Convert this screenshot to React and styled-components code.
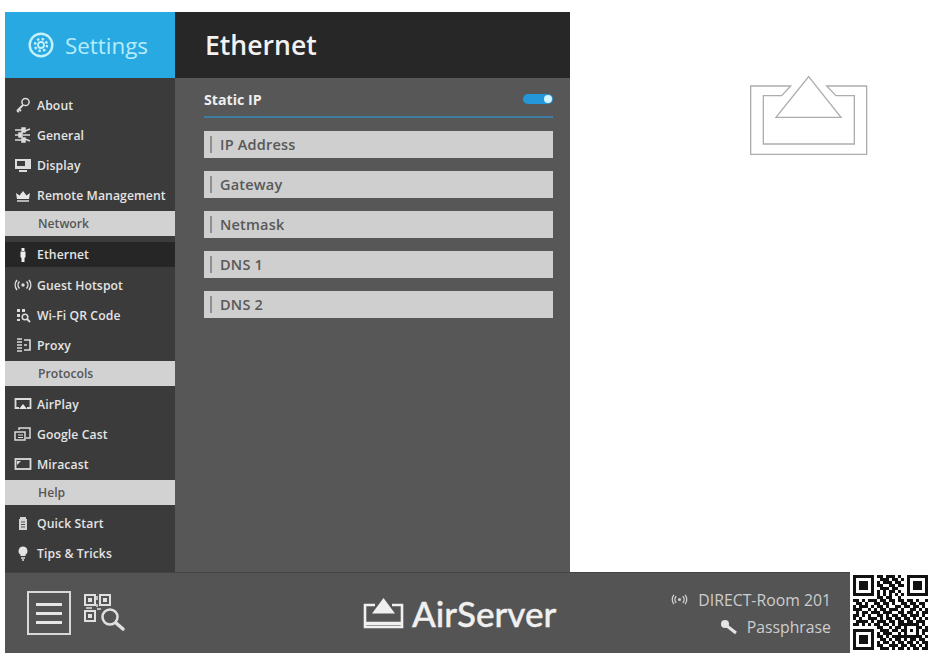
import React from "react";
import styled, { createGlobalStyle } from "styled-components";

const GlobalStyle = createGlobalStyle`
  html, body { margin: 0; padding: 0; background: #fff; }
  body { font-family: "Open Sans", "Liberation Sans", sans-serif; }
`;

const Page = styled.div`
  width: 931px;
  height: 653px;
  overflow: hidden;
  display: flex;
  flex-direction: column;
  background: #fff;
`;

const Top = styled.div`
  display: flex;
  height: 560px;
  margin-top: 12px;
  margin-left: 5px;
`;

const Sidebar = styled.aside`
  width: 170px;
  display: flex;
  flex-direction: column;
  background: #3b3b3b;
`;

const Brand = styled.div`
  height: 66px;
  display: flex;
  align-items: center;
  gap: 11px;
  padding-left: 23px;
  background: #29a9e1;
  color: #b5ecfb;
  font-size: 22.4px;
`;

const Nav = styled.nav`
  display: flex;
  flex-direction: column;
  padding-top: 12px;
`;

const Row = styled.div`
  height: ${(p) => (p.$active ? 25 : 30)}px;
  margin: ${(p) => (p.$active ? "3px 0" : "0")};
  display: flex;
  align-items: center;
  padding-left: 9px;
  gap: 5px;
  background: ${(p) => (p.$active ? "#262626" : "transparent")};
  color: #e4e4e4;
  font-size: 12.2px;
  font-weight: 600;
  white-space: nowrap;
  letter-spacing: 0.1px;
`;

const Band = styled.div`
  height: 25px;
  margin: 1px 0 3px;
  display: flex;
  align-items: center;
  padding-left: 33px;
  background: #d2d2d2;
  color: #565656;
  font-size: 12.2px;
  font-weight: 600;
`;

const Main = styled.main`
  width: 395px;
  display: flex;
  flex-direction: column;
  background: #575757;
`;

const TitleBar = styled.div`
  height: 66px;
  display: flex;
  align-items: center;
  padding-left: 30px;
  background: #272727;
  color: #f2f2f2;
  font-size: 26.6px;
  font-weight: 600;
`;

const Content = styled.div`
  display: flex;
  flex-direction: column;
  gap: 13px;
  padding: 8px 17px 0 29px;
`;

const ToggleRow = styled.div`
  height: 26px;
  display: flex;
  align-items: center;
  justify-content: space-between;
  border-bottom: 2px solid #3f7ea3;
  color: #eee;
  font-size: 14.2px;
  font-weight: 700;
  padding-bottom: 4px;
`;

const Toggle = styled.span`
  position: relative;
  width: 30px;
  height: 10px;
  border-radius: 5px;
  background: #2497db;

  &::after {
    content: "";
    position: absolute;
    right: 1px;
    top: 1px;
    width: 8px;
    height: 8px;
    border-radius: 50%;
    background: #d6f4ff;
  }
`;

const Field = styled.div`
  height: 27px;
  box-sizing: border-box;
  display: flex;
  align-items: center;
  padding-left: 6px;
  background: #cfcfcf;
  color: #585858;
  font-size: 14.5px;
  font-weight: 600;
  letter-spacing: 0.2px;

  &::before {
    content: "";
    width: 2px;
    height: 17px;
    margin-right: 8px;
    background: #8f8f8f;
  }
`;

const Aside = styled.div`
  flex: 1;
  padding: 48px 0 0 160px;
`;

const Bottom = styled.div`
  flex: 1;
  display: flex;
  margin-left: 5px;
`;

const Bar = styled.footer`
  flex: 1;
  display: flex;
  align-items: center;
  padding: 0 19px 0 22px;
  background: #545454;
  border-top: 1px solid #444;
`;

const Tools = styled.div`
  display: flex;
  align-items: center;
  gap: 12px;
`;

const MenuButton = styled.button`
  width: 44px;
  height: 44px;
  box-sizing: border-box;
  display: flex;
  flex-direction: column;
  align-items: center;
  justify-content: center;
  gap: 6px;
  padding: 0;
  border: 2px solid #d8d8d8;
  background: transparent;

  span {
    width: 26px;
    height: 3px;
    background: #e6e6e6;
  }
`;

const Logo = styled.div`
  display: flex;
  align-items: center;
  gap: 8px;
  margin-left: 236px;
  color: #f0f0f0;
  font-family: Lato, "Liberation Sans", sans-serif;
  font-size: 35px;
  font-weight: 500;
  -webkit-text-stroke: 0.4px #f0f0f0;
`;

const Network = styled.div`
  margin-left: auto;
  display: flex;
  flex-direction: column;
  align-items: flex-end;
  gap: 5px;
  color: #cdcdcd;
  font-size: 15.8px;
`;

const NetworkLine = styled.div`
  display: flex;
  align-items: center;
  gap: ${(p) => p.$gap}px;
`;

const QrBox = styled.div`
  width: 81px;
  box-sizing: border-box;
  background: #fff;
  display: flex;
  align-items: center;
  padding-left: 3px;
`;

const Ico = ({ children }) => (
  <svg width="18" height="16" viewBox="0 0 18 16" fill="none" stroke="#dcdcdc" strokeWidth="1.5" style={{ flex: "none" }}>
    {children}
  </svg>
);

const icons = {
  about: (
    <Ico>
      <circle cx="11.5" cy="5" r="3.6" />
      <path d="M9 8l-6 6M5 12l2 2M3 14l2 1" strokeWidth="1.8" />
    </Ico>
  ),
  general: (
    <Ico>
      <path d="M1 3h8M1 8h5M1 13h8M11 4l5-2M9 8h7M11 12l5 2" strokeWidth="1.6" />
      <rect x="8" y="1" width="3" height="4" fill="#dcdcdc" />
      <rect x="5" y="6" width="3" height="4" fill="#dcdcdc" />
      <rect x="8" y="11" width="3" height="4" fill="#dcdcdc" />
    </Ico>
  ),
  display: (
    <Ico>
      <rect x="1" y="2" width="16" height="10" fill="#dcdcdc" stroke="none" />
      <path d="M3 4h8v5H3z" fill="#3b3b3b" stroke="none" />
      <path d="M5 14h8" strokeWidth="2" />
    </Ico>
  ),
  crown: (
    <Ico>
      <path d="M2 6l3.5 2.5L9 4l3.5 4.5L16 6l-1 6H3z" fill="#e6e6e6" stroke="none" />
      <path d="M3 14h12" strokeWidth="1.5" />
    </Ico>
  ),
  ethernet: (
    <Ico>
      <path d="M6.5 4.5h5V10l-1 1v4h-3v-4l-1-1z" fill="#eee" stroke="none" />
      <path d="M7.5 1h3v3h-3z" fill="#eee" stroke="none" />
    </Ico>
  ),
  hotspot: (
    <Ico>
      <circle cx="9" cy="8" r="1.7" fill="#dcdcdc" stroke="none" />
      <path d="M5.5 4.5a5 5 0 000 7M12.5 4.5a5 5 0 010 7M3 3a8 8 0 000 10M15 3a8 8 0 010 10" />
    </Ico>
  ),
  wifiqr: (
    <Ico>
      <path d="M3 2h3v3H3zM8 2h3v3H8zM3 7h3v3H3zM3 12h3v2H3z" fill="#dcdcdc" stroke="none" />
      <circle cx="11" cy="10" r="2.8" />
      <path d="M13 12l3 3" strokeWidth="1.8" />
    </Ico>
  ),
  proxy: (
    <Ico>
      <path d="M3 2h5M3 5h5M3 8h5M3 11h5M3 14h5" strokeWidth="1.6" />
      <path d="M10 3h6v10h-6M10 8h3" strokeWidth="1.6" />
    </Ico>
  ),
  airplay: (
    <Ico>
      <path d="M5 12H1.5V3h15v9H13" strokeWidth="1.8" />
      <path d="M9 8l4 5H5z" fill="#e6e6e6" stroke="none" />
    </Ico>
  ),
  cast: (
    <Ico>
      <path d="M5 4V2h11v10h-4" />
      <rect x="1" y="6" width="10" height="8" />
      <path d="M4 9h5M4 11.5h5" strokeWidth="1.2" />
    </Ico>
  ),
  miracast: (
    <Ico>
      <rect x="1.5" y="3" width="15" height="10" strokeWidth="1.8" />
      <path d="M3 5h4L3 9z" fill="#dcdcdc" stroke="none" />
    </Ico>
  ),
  quick: (
    <Ico>
      <path d="M6 2h6v2h1v11H5V4h1z" fill="#d4d4d4" stroke="none" />
      <path d="M7 7h4M7 9.5h4M7 12h4" stroke="#555" strokeWidth="1" />
    </Ico>
  ),
  tips: (
    <Ico>
      <path d="M9 1.5a4.5 4.5 0 00-2.5 8.2V11h5V9.7A4.5 4.5 0 009 1.5z" fill="#e4e4e4" stroke="none" />
      <path d="M7 13h4M8 15h2" strokeWidth="1.4" />
    </Ico>
  ),
};

const Gear = () => (
  <svg width="26" height="26" viewBox="0 0 26 26" fill="none" stroke="#c5f1fc">
    <circle cx="13" cy="13" r="11.3" strokeWidth="2.4" />
    <circle cx="13" cy="13" r="3" strokeWidth="1.8" />
    <circle cx="13" cy="13" r="6" strokeWidth="2.4" strokeDasharray="2.4 2.3" />
  </svg>
);

const BigAirplay = () => (
  <svg width="160" height="110" viewBox="0 0 480 330" fill="none" stroke="#adadad" strokeWidth="4" style={{ display: "block" }}>
    <path d="M182 78H62V283H410V78H290L318 107H373V252H100V107H155Z" />
    <path d="M236 50L333 172H138Z" />
  </svg>
);

const LogoMark = () => (
  <svg width="41" height="31" viewBox="0 0 41 31" fill="none" style={{ flex: "none" }}>
    <path d="M12 7H2V29H39V7H29" stroke="#f0f0f0" strokeWidth="2.6" />
    <path d="M2 25.5H39" stroke="#f0f0f0" strokeWidth="3.4" />
    <path d="M20.5 0L32 15.5H9z" fill="#f0f0f0" />
  </svg>
);

const QrSearch = () => (
  <svg width="44" height="40" viewBox="0 0 44 40" fill="none" stroke="#e0e0e0" style={{ display: "block" }}>
    <rect x="2" y="2" width="10" height="10" strokeWidth="2" />
    <rect x="5" y="5" width="4" height="4" fill="#e0e0e0" stroke="none" />
    <rect x="17" y="2" width="10" height="10" strokeWidth="2" />
    <rect x="20" y="5" width="4" height="4" fill="#e0e0e0" stroke="none" />
    <rect x="2" y="18" width="10" height="10" strokeWidth="2" />
    <rect x="5" y="21" width="4" height="4" fill="#e0e0e0" stroke="none" />
    <path d="M14 3v4M14 11v3M3 15h6M14 16h4" strokeWidth="1.5" />
    <circle cx="27" cy="24" r="7.5" strokeWidth="2.5" />
    <path d="M33 30l7 6" strokeWidth="3.5" strokeLinecap="round" />
  </svg>
);

const SignalSmall = () => (
  <svg width="17" height="13" viewBox="0 0 18 14" fill="none" stroke="#cfcfcf" strokeWidth="1.5">
    <circle cx="9" cy="7" r="1.7" fill="#cfcfcf" stroke="none" />
    <path d="M5.5 3.5a5 5 0 000 7M12.5 3.5a5 5 0 010 7M3 2a8 8 0 000 10M15 2a8 8 0 010 10" />
  </svg>
);

const KeyIcon = () => (
  <svg width="18" height="16" viewBox="0 0 18 16" fill="none">
    <circle cx="5" cy="5" r="4" fill="#e4e4e4" />
    <path d="M7 7l9 7" stroke="#e4e4e4" strokeWidth="3" />
  </svg>
);

const qrRows = [
  "1111111 0 110111010 0 1111111",
  "1000001 0 011101101 0 1000001",
  "1011101 0 101110110 0 1011101",
  "1011101 0 110011011 0 1011101",
  "1011101 0 011101100 0 1011101",
  "1000001 0 101011010 0 1000001",
  "1111111 0 101010101 0 1111111",
  "0000000 0 110110010 0 0000000",
  "1101011 1 011011011 0 1101001",
  "0110100 1 101101001 1 0110110",
  "1011101 0 110100110 1 1011010",
  "1110010 1 011011101 0 0110101",
  "0101101 1 101110011 0 1101011",
  "1101010 0 110101101 1 0111010",
  "1010011 1 010110110 1 1010101",
  "0111101 0 111011011 0 1101110",
  "1101010 1 101101011 1 1111010",
  "0000000 0 110010110 1 0001101",
  "1111111 0 011101101 1 0101011",
  "1000001 0 101110010 1 0001010",
  "1011101 0 110101111 1 1111101",
  "1011101 0 011010110 1 0110110",
  "1011101 0 101101011 0 1101011",
  "1000001 0 110011101 1 0110101",
  "1111111 0 011101011 0 1011011",
].map((r) => r.replace(/ /g, ""));

const QrCode = () => (
  <svg width="75" height="75" viewBox="0 0 25 25" shapeRendering="crispEdges">
    {qrRows.map((row, y) =>
      row.split("").map((c, x) => (c === "1" ? <rect key={`${x}-${y}`} x={x} y={y} width="1" height="1" fill="#111" /> : null))
    )}
  </svg>
);

const sections = [
  { items: [["About", "about"], ["General", "general"], ["Display", "display"], ["Remote Management", "crown"]] },
  { band: "Network", items: [["Ethernet", "ethernet", true], ["Guest Hotspot", "hotspot"], ["Wi-Fi QR Code", "wifiqr"], ["Proxy", "proxy"]] },
  { band: "Protocols", items: [["AirPlay", "airplay"], ["Google Cast", "cast"], ["Miracast", "miracast"]] },
  { band: "Help", items: [["Quick Start", "quick"], ["Tips & Tricks", "tips"]] },
];

const fields = ["IP Address", "Gateway", "Netmask", "DNS 1", "DNS 2"];

export default function App() {
  return (
    <Page>
      <GlobalStyle />
      <Top>
        <Sidebar>
          <Brand>
            <Gear />
            Settings
          </Brand>
          <Nav>
            {sections.map((section, i) => (
              <React.Fragment key={i}>
                {section.band && <Band>{section.band}</Band>}
                {section.items.map(([label, icon, active]) => (
                  <Row key={label} $active={active}>
                    {icons[icon]}
                    {label}
                  </Row>
                ))}
              </React.Fragment>
            ))}
          </Nav>
        </Sidebar>
        <Main>
          <TitleBar>Ethernet</TitleBar>
          <Content>
            <ToggleRow>
              Static IP
              <Toggle />
            </ToggleRow>
            {fields.map((f) => (
              <Field key={f}>{f}</Field>
            ))}
          </Content>
        </Main>
        <Aside>
          <BigAirplay />
        </Aside>
      </Top>
      <Bottom>
        <Bar>
          <Tools>
            <MenuButton>
              <span />
              <span />
              <span />
            </MenuButton>
            <QrSearch />
          </Tools>
          <Logo>
            <LogoMark />
            AirServer
          </Logo>
          <Network>
            <NetworkLine $gap={10}>
              <SignalSmall />
              DIRECT-Room 201
            </NetworkLine>
            <NetworkLine $gap={9}>
              <KeyIcon />
              Passphrase
            </NetworkLine>
          </Network>
        </Bar>
        <QrBox>
          <QrCode />
        </QrBox>
      </Bottom>
    </Page>
  );
}
